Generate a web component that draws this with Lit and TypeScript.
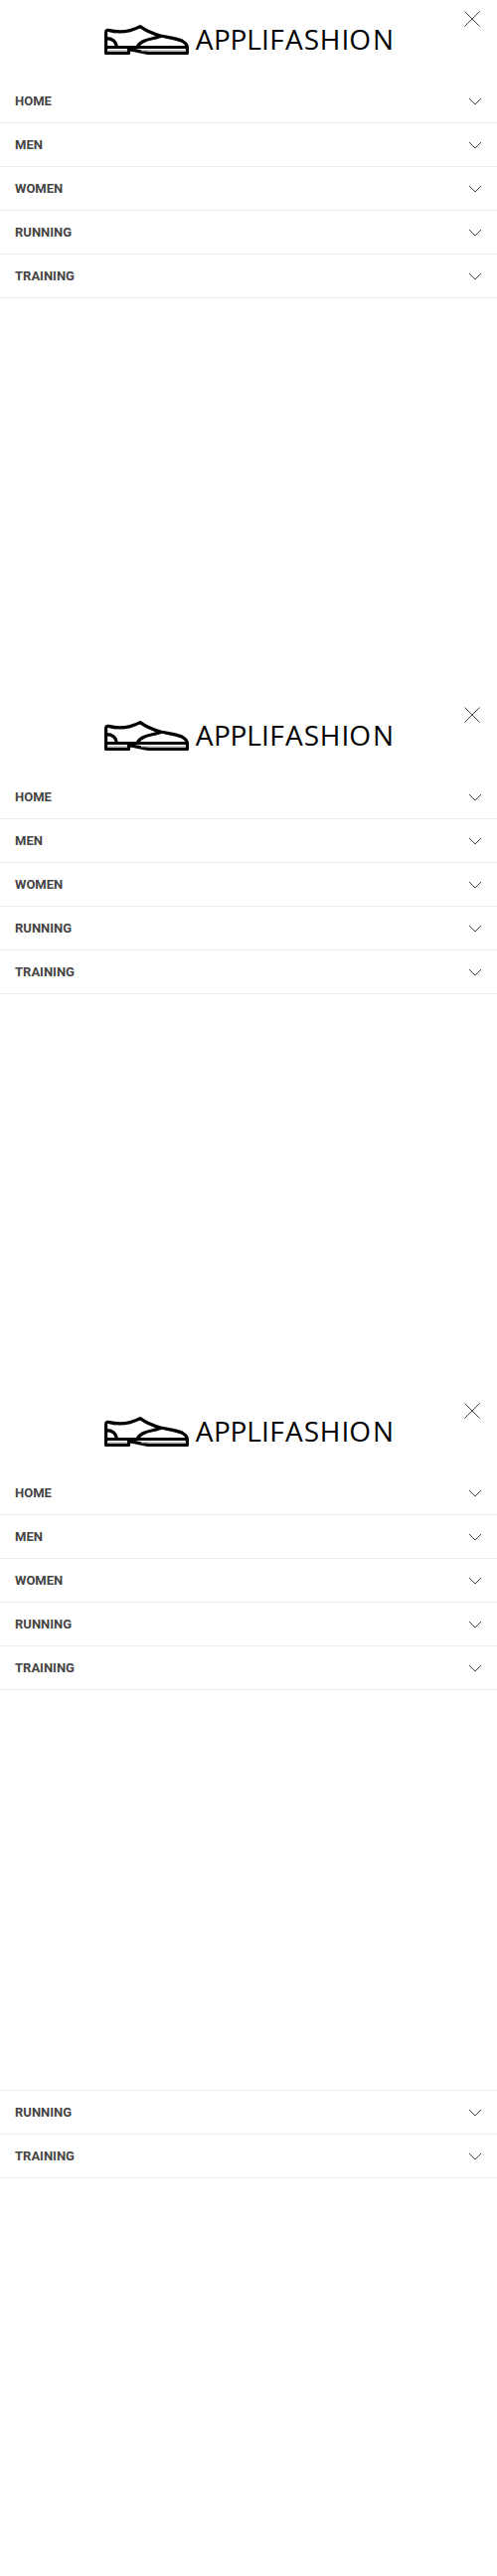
import { LitElement, html, css } from "lit";
import { customElement, property } from "lit/decorators.js";

const CATEGORIES = ["Home", "Men", "Women", "Running", "Training"];

@customElement("brand-logo")
class BrandLogo extends LitElement {
  static styles = css`
    :host { display: block; width: 300px; height: 52px; }
    .logo { display: block; overflow: visible; }
    .shoe { fill: none; stroke: #000; stroke-width: 3.2; stroke-linejoin: round; }
    .strip { stroke: #c4c4c4; stroke-width: 1.4; }
    .wordmark { font-family: "Open Sans", "Noto Sans", sans-serif; font-weight: 400; font-size: 28px; fill: #000; }
  `;
  render() {
    return html`
      <svg class="logo" width="300" height="52" viewBox="100 14 300 52" role="img" aria-label="Applifashion">
        <g class="shoe">
          <path d="M106.6 53.4V32.2Q106.6 30.2 109 30.4C119 33 130 32.5 141 26.6C147 31 153 33.6 161.5 36C170 37.8 178 38.6 183.5 41.3Q188.4 44 188.4 48V53.4H152C145 53.4 138 50.5 129.5 49.6V53.4Z" />
          <path d="M106 47.5H189" />
          <path d="M107 38.6C113 38.6 116.5 41 117.6 47" />
          <path d="M162 36.3C156 39.3 142 38.8 138.3 47" />
          <path class="strip" d="M109 50.8H128M142 50.8H187" />
        </g>
        <text class="wordmark" y="50" x="196.7 214.9 231.5 248.2 262.9 271.2 287 305.8 321.7 343.5 351.3 374.9">APPLIFASHION</text>
      </svg>
    `;
  }
}

@customElement("menu-row")
class MenuRow extends LitElement {
  @property() label = "";
  static styles = css`
    :host {
      display: flex; align-items: center; justify-content: space-between;
      box-sizing: border-box; height: 44px; padding: 0 15px;
      border-bottom: 1px solid #ededed;
    }
    .label {
      font: 700 13px/20px Roboto, sans-serif; color: #444; text-transform: uppercase;
    }
    .chevron { display: block; fill: none; stroke: #444; stroke-width: 1; }
  `;
  render() {
    return html`
      <span class="label">${this.label}</span>
      <svg class="chevron" width="14" height="8" viewBox="0 0 14 8"><path d="M.9 .9L7 7L13.1 .9" /></svg>
    `;
  }
}

@customElement("menu-panel")
class MenuPanel extends LitElement {
  static styles = css`
    :host { display: block; position: relative; height: 700px; }
    .head { display: flex; justify-content: center; box-sizing: border-box; height: 80px; padding-top: 14px; }
    .close {
      position: absolute; top: 11px; right: 17px; padding: 0; border: 0; background: none;
      width: 16px; height: 16px;
    }
    .cross { display: block; fill: none; stroke: #444; stroke-width: 1; }
  `;
  render() {
    return html`
      <header class="head"><brand-logo></brand-logo></header>
      <button class="close" aria-label="Close">
        <svg class="cross" width="16" height="16" viewBox="0 0 16 16"><path d="M.5 .5L15.5 15.5M15.5 .5L.5 15.5" /></svg>
      </button>
      <nav>${CATEGORIES.map((c) => html`<menu-row label=${c}></menu-row>`)}</nav>
    `;
  }
}

@customElement("app-root")
class AppRoot extends LitElement {
  static styles = css`
    :host { display: block; width: 500px; height: 2591px; overflow: hidden; background: #fff; }
    .rest { padding-top: 2px; }
    .tail { border-top: 1px solid #ededed; }
  `;
  render() {
    return html`
      ${[0, 1, 2].map(() => html`<menu-panel></menu-panel>`)}
      <div class="rest">
        <nav class="tail">${CATEGORIES.slice(3).map((c) => html`<menu-row label=${c}></menu-row>`)}</nav>
      </div>
    `;
  }
}
